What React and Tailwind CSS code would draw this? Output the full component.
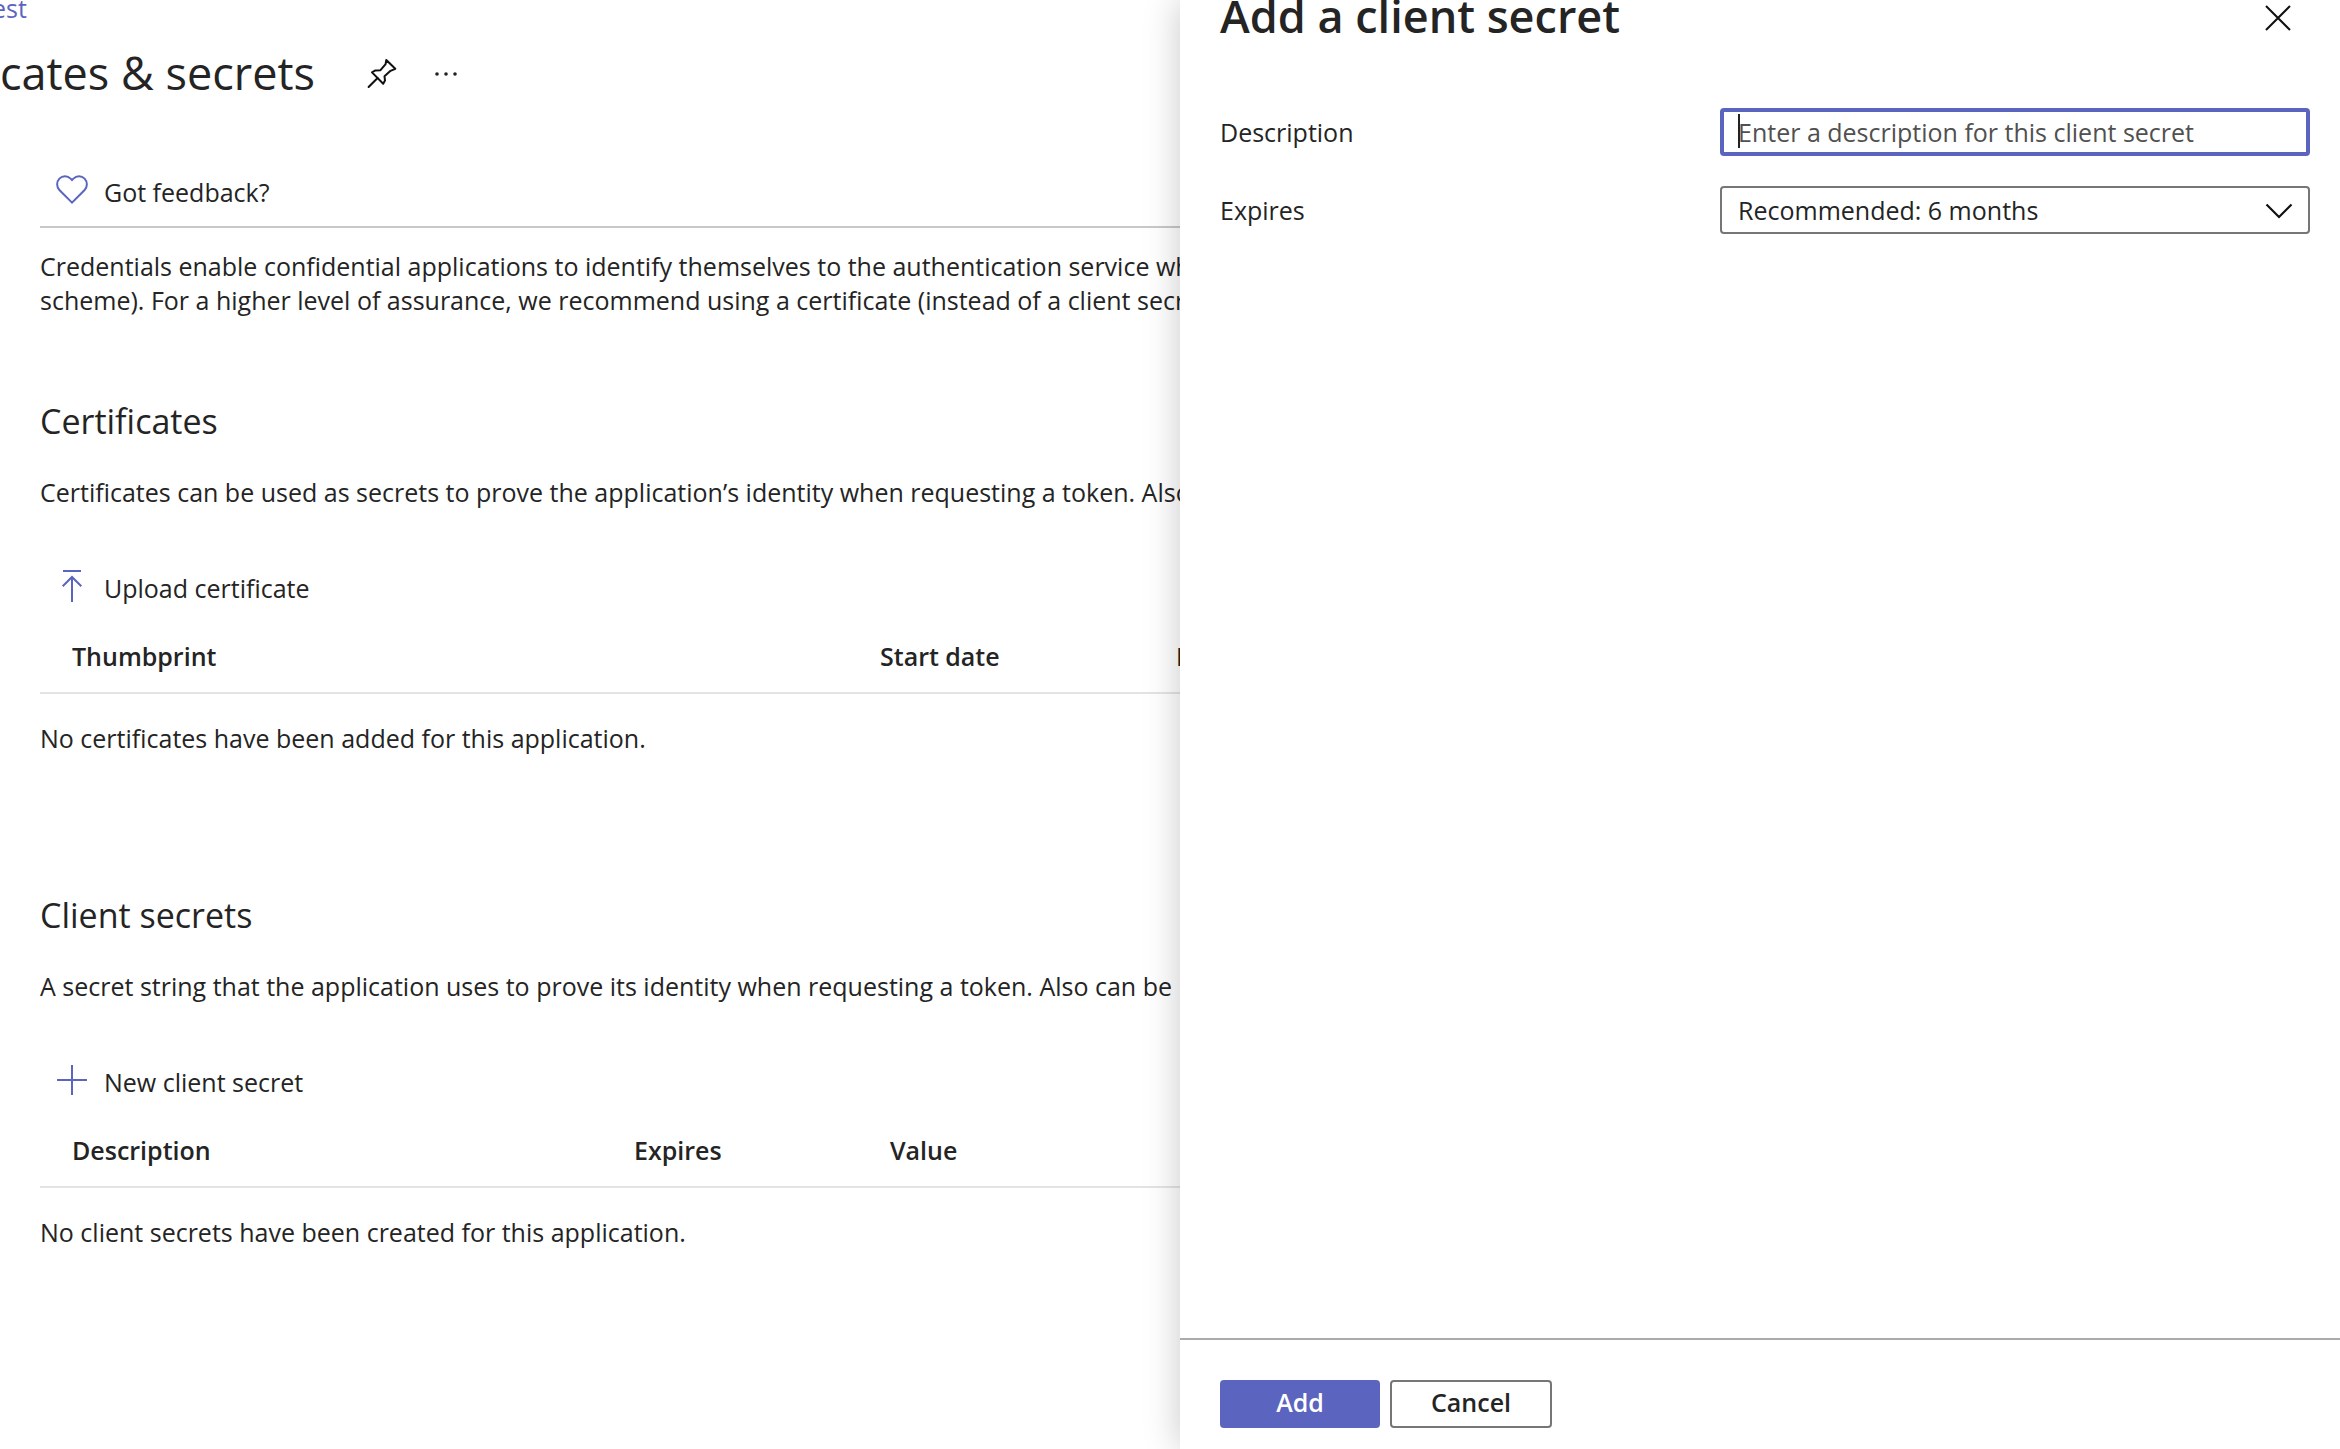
import React from "react";

function PinIcon() {
  return (
    <svg className="size-8" viewBox="0 0 32 32" fill="none" stroke="#111" strokeWidth="2" strokeLinejoin="round" aria-hidden="true">
      <path d="M20.3 3 L29.3 11.8 L24.5 13.8 L18.5 19.3 L19 23.5 L17.2 26.8 L6 15.4 L9 13.6 L14.5 13.2 L19.6 7.2 Z" />
      <path d="M11.6 21 L2.6 30" strokeLinecap="round" />
    </svg>
  );
}

function DotsIcon() {
  return (
    <svg className="h-8 w-6" viewBox="0 0 24 32" fill="#222" aria-hidden="true">
      <circle cx="3" cy="17" r="1.8" />
      <circle cx="12" cy="17" r="1.8" />
      <circle cx="21" cy="17" r="1.8" />
    </svg>
  );
}

function HeartIcon() {
  return (
    <svg className="mb-1 size-8" viewBox="0 0 32 32" fill="none" stroke="#5b64be" strokeWidth="2" aria-hidden="true">
      <path d="M16 28.6 L3.4 16 A8.3 8.3 0 0 1 3.4 4.6 A8.1 8.1 0 0 1 14.6 4.6 L16 6 L17.4 4.6 A8.1 8.1 0 0 1 28.6 4.6 A8.3 8.3 0 0 1 28.6 16 Z" />
    </svg>
  );
}

function UploadIcon() {
  return (
    <svg className="mb-1 size-8" viewBox="0 0 32 32" fill="none" stroke="#5b64be" strokeWidth="2" aria-hidden="true">
      <path d="M7 1 H25 M16 32 V7.5 M6.7 16.3 L16 7 L25.3 16.3" />
    </svg>
  );
}

function PlusIcon() {
  return (
    <svg className="mb-1 size-8" viewBox="0 0 32 32" fill="none" stroke="#5b64be" strokeWidth="2" aria-hidden="true">
      <path d="M1 16 H31 M16 1 V31" />
    </svg>
  );
}

function Command({ icon, children }) {
  return (
    <button type="button" className="flex items-center gap-4 pl-4">
      {icon}
      <span>{children}</span>
    </button>
  );
}

function CredentialSection({ title, description, icon, action, columns, empty }) {
  return (
    <section>
      <h2 className="text-[34px] leading-[50px]">{title}</h2>
      <p className="mt-[29px]">{description}</p>
      <div className="mt-[45px] flex h-[68px]">
        <Command icon={icon}>{action}</Command>
      </div>
      <table className="w-full table-fixed border-collapse text-left">
        <thead>
          <tr className="border-b-2 border-[#e4e4e4]">
            {columns.map((c) => (
              <th key={c.label} scope="col" className={`h-[71px] pb-[2px] pl-8 font-semibold ${c.width}`}>
                {c.label}
              </th>
            ))}
          </tr>
        </thead>
        <tbody>
          <tr>
            <td colSpan={columns.length} className="pt-[27px]">{empty}</td>
          </tr>
        </tbody>
      </table>
    </section>
  );
}

export default function App() {
  return (
    <div className="grid min-h-screen grid-cols-[118fr_116fr] bg-white font-['Open_Sans','Noto_Sans',sans-serif] text-[25px] leading-[34px] text-[#242424]">
      <main className="min-w-0 overflow-hidden whitespace-nowrap">
        <nav className="-ml-2 flex leading-4">
          <a href="#overview" className="text-[#5b64be]">est</a>
        </nav>
        <header className="mt-[25px] flex items-center">
          <h1 className="text-[45px] leading-[64px]">cates &amp; secrets</h1>
          <button type="button" aria-label="Pin" className="ml-[51px]"><PinIcon /></button>
          <button type="button" aria-label="More" className="ml-9"><DotsIcon /></button>
        </header>
        <div className="pl-10">
          <div className="mt-[53px] flex h-[70px] border-b-2 border-[#c8c8c8]">
            <Command icon={<HeartIcon />}>Got feedback?</Command>
          </div>
          <p className="mt-[21px]">
            Credentials enable confidential applications to identify themselves to the authentication service when
            <br />
            scheme). For a higher level of assurance, we recommend using a certificate (instead of a client secret)
          </p>
          <div className="mt-[79px] flex flex-col gap-[135px]">
            <CredentialSection
              title="Certificates"
              description="Certificates can be used as secrets to prove the application’s identity when requesting a token. Also"
              icon={<UploadIcon />}
              action="Upload certificate"
              columns={[
                { label: "Thumbprint", width: "w-[808px]" },
                { label: "Start date", width: "w-[296px]" },
                { label: "Expires", width: "" },
              ]}
              empty="No certificates have been added for this application."
            />
            <CredentialSection
              title="Client secrets"
              description="A secret string that the application uses to prove its identity when requesting a token. Also can be referred"
              icon={<PlusIcon />}
              action="New client secret"
              columns={[
                { label: "Description", width: "w-[562px]" },
                { label: "Expires", width: "w-[256px]" },
                { label: "Value", width: "" },
              ]}
              empty="No client secrets have been created for this application."
            />
          </div>
        </div>
      </main>

      <aside className="z-10 flex min-w-0 flex-col bg-white shadow-[0_0_34px_rgba(0,0,0,0.22)]">
        <form className="flex grow flex-col">
          <div className="grow pr-[30px] pl-10">
            <div className="flex items-center justify-between">
              <h2 className="text-[45px] leading-8 font-semibold">Add a client secret</h2>
              <button type="button" aria-label="Close" className="mr-4">
                <svg className="size-8" viewBox="0 0 32 32" fill="none" stroke="#111" strokeWidth="2" aria-hidden="true">
                  <path d="M4 6 L28 30 M28 6 L4 30" />
                </svg>
              </button>
            </div>
            <div className="mt-[76px] grid grid-cols-[50fr_59fr] items-center gap-y-[30px]">
              <label htmlFor="description">Description</label>
              <div className="relative flex">
                <input
                  id="description"
                  type="text"
                  placeholder="Enter a description for this client secret"
                  className="h-12 w-full rounded-sm border-4 border-[#5b64be] px-[14px] outline-none placeholder:text-[#505050]"
                />
                <span className="absolute top-[6px] left-[18px] h-[34px] w-[2px] bg-[#222]" />
              </div>
              <label htmlFor="expires">Expires</label>
              <div className="relative flex">
                <select id="expires" className="h-12 w-full appearance-none rounded-sm border-2 border-[#767676] bg-white px-4">
                  <option>Recommended: 6 months</option>
                </select>
                <svg className="pointer-events-none absolute top-2 right-4 size-8" viewBox="0 0 32 32" fill="none" stroke="#111" strokeWidth="2.2" aria-hidden="true">
                  <path d="M4.5 10.5 L17 23 L29.5 10.5" />
                </svg>
              </div>
            </div>
          </div>
          <footer className="flex gap-[10px] border-t-2 border-[#ababab] pt-10 pr-[30px] pb-[21px] pl-10">
            <button type="button" className="h-12 w-40 rounded-sm bg-[#5b64be] pb-1 font-semibold text-white">Add</button>
            <button type="button" className="h-12 w-[162px] rounded-sm border-2 border-[#767676] pb-1 font-semibold">Cancel</button>
          </footer>
        </form>
      </aside>
    </div>
  );
}
